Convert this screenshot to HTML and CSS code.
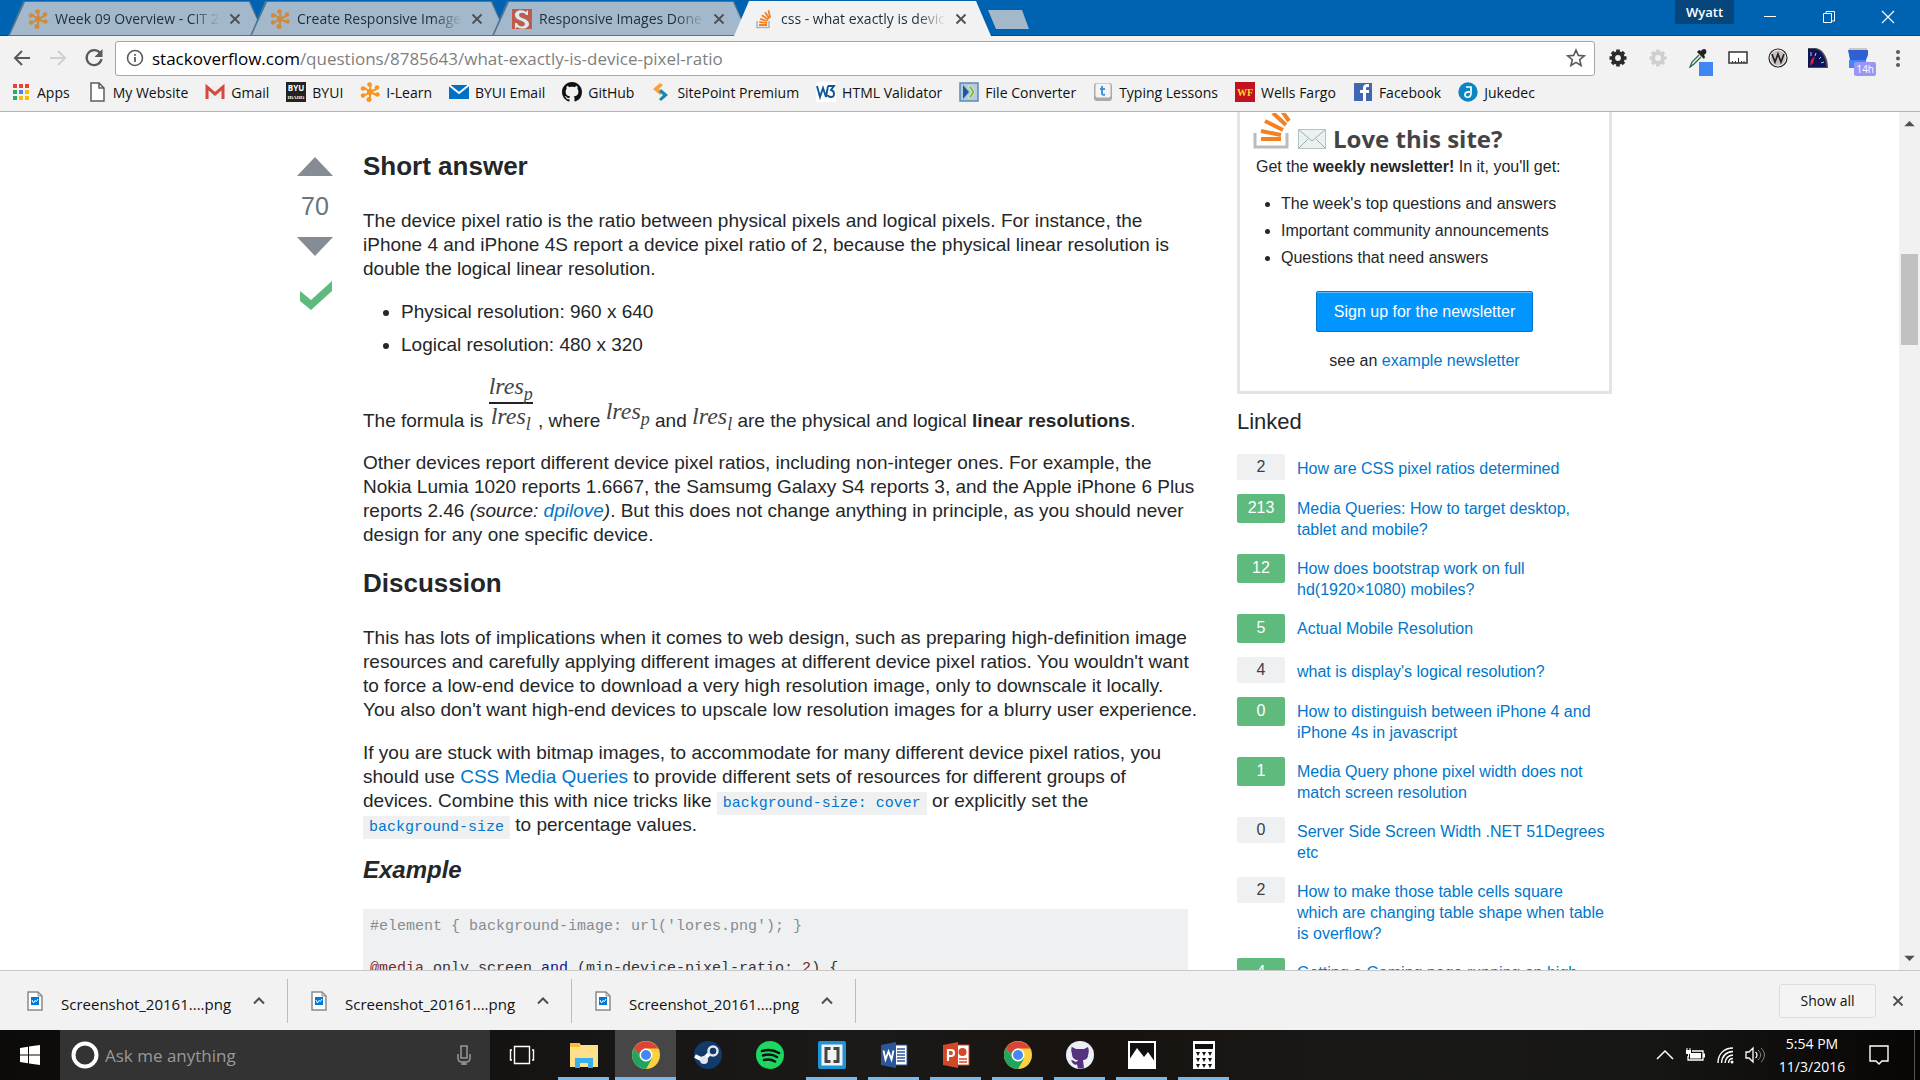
FILE: index.html
```html
<!DOCTYPE html>
<html lang="en">
<head>
<meta charset="utf-8">
<title>css - what exactly is device pixel ratio?</title>
<link rel="stylesheet" href="styles.css">
</head>
<body>
<svg class="defs" aria-hidden="true">
  <symbol id="ilearn" viewBox="0 0 20 20">
    <path d="M10 10 4 5.500M10 10 10.500 3M10 10 16.500 7M10 10 16.500 13M10 10 10 17M10 10 3.500 14" stroke="currentColor" stroke-width="2"/>
    <g fill="currentColor"><circle cx="10" cy="10" r="3"/><circle cx="9.500" cy="2.500" r="2.300"/><circle cx="3" cy="6.500" r="2.300"/><circle cx="17" cy="5.500" r="2.300"/><circle cx="17.500" cy="12.500" r="2.200"/><circle cx="9" cy="17.500" r="2.500"/><circle cx="3" cy="13.500" r="2.200"/></g>
  </symbol>
  <symbol id="so" viewBox="0 0 20 20">
    <path d="M3 12v6.500h12V12" fill="none" stroke="#b0b3b6" stroke-width="1.500"/>
    <g stroke="#f48024" stroke-width="1.800"><path d="M5 16h8M5.200 13.100l7.900.8M6 9.800l7.600 2.200M7.800 6.300l6.600 4.200M10.900 3.200l4.600 6.300M14.500 1.200l1.700 7.600"/></g>
  </symbol>
  <symbol id="github" viewBox="0 0 16 16"><path fill="currentColor" d="M8 0C3.580 0 0 3.580 0 8c0 3.540 2.290 6.530 5.470 7.590.4.070.55-.17.55-.38 0-.19-.01-.82-.01-1.490-2.010.37-2.530-.49-2.690-.94-.09-.23-.48-.94-.82-1.130-.28-.15-.68-.52-.01-.53.63-.01 1.080.58 1.230.82.72 1.210 1.870.87 2.330.66.070-.52.28-.87.51-1.070-1.780-.2-3.640-.89-3.640-3.950 0-.87.31-1.590.82-2.150-.08-.2-.36-1.020.080-2.120 0 0 .67-.21 2.200.82.64-.18 1.320-.27 2-.27s1.360.09 2 .27c1.530-1.040 2.200-.82 2.200-.82.44 1.100.16 1.920.080 2.120.51.56.82 1.270.82 2.150 0 3.070-1.870 3.750-3.650 3.950.29.25.54.73.54 1.480 0 1.070-.01 1.930-.01 2.200 0 .21.15.46.55.38A8.010 8.010 0 0 0 16 8c0-4.420-3.580-8-8-8"/></symbol>
  <symbol id="chrome" viewBox="0 0 28 28">
    <circle cx="14" cy="14" r="14" fill="#fdd13c"/>
    <path d="M1.900 7A14 14 0 0 0 14 28L20 17.500 8 17.500z" fill="#1fa463"/>
    <path d="M8 17.500 1.900 7 8 7l6 3z" fill="#1fa463"/><path d="M1.900 7A14 14 0 0 1 26.100 7.500H14a7 7 0 0 0-6.700 5z" fill="#dc4437"/>
    <circle cx="14" cy="14" r="6.500" fill="#fff"/><circle cx="14" cy="14" r="5" fill="#4688f1"/>
  </symbol>
  <symbol id="x" viewBox="0 0 12 12"><path d="M1.500 1.500l9 9M10.500 1.500l-9 9" stroke="currentColor" stroke-width="1.800" fill="none"/></symbol>
  <symbol id="up" viewBox="0 0 12 12"><path d="M1 8.500 6 3.500l5 5" stroke="currentColor" stroke-width="2" fill="none"/></symbol>
  <symbol id="gear" viewBox="0 0 20 20"><circle cx="10" cy="10" r="4.800" fill="none" stroke="currentColor" stroke-width="3.800"/><path d="M10 1.500v3M10 15.500v3M1.500 10h3M15.500 10h3M4 4l2.200 2.200M13.800 13.800l2.200 2.200M4 16l2.200-2.200M13.800 6.200l2.200-2.200" stroke="currentColor" stroke-width="3.600"/></symbol>
  <symbol id="picfile" viewBox="0 0 16 20"><path d="M1 1h10l4 4v14H1z" fill="#fff" stroke="#8a8a8a" stroke-width="1.500"/><path d="M11 1v4h4" fill="none" stroke="#8a8a8a"/><path d="M4 6h8v8H4z" fill="#0078d7"/><path d="M5 9l1.500 3L8 9.500l1.500 1L11 8" stroke="#fff" fill="none"/></symbol>
</svg>

<header class="chrome">
  <div class="titlebar">
    <nav class="tabs" aria-label="Tabs">
      <div class="tab"><svg class="fav muted"><use href="#ilearn"/></svg><span class="tab-title">Week 09 Overview - CIT 230</span><button class="icon-btn" aria-label="Close tab"><svg><use href="#x"/></svg></button></div>
      <div class="tab"><svg class="fav muted"><use href="#ilearn"/></svg><span class="tab-title">Create Responsive Images</span><button class="icon-btn" aria-label="Close tab"><svg><use href="#x"/></svg></button></div>
      <div class="tab"><svg class="fav" viewBox="0 0 20 20"><path d="M0 0h20v20H0z" fill="#bf5b4b"/><path d="M16 1v5h-2C13 3 7 3 7 6c0 4 10 3 10 9 0 5-8 6-12 3l-2 2v-6h2c2 5 8 4 8 1 0-4-10-3-10-9 0-5 7-6 11-3z" fill="#dce9f2"/></svg><span class="tab-title">Responsive Images Done</span><button class="icon-btn" aria-label="Close tab"><svg><use href="#x"/></svg></button></div>
      <div class="tab active"><svg class="fav"><use href="#so"/></svg><span class="tab-title">css - what exactly is device</span><button class="icon-btn" aria-label="Close tab"><svg><use href="#x"/></svg></button></div>
      <button class="new-tab" aria-label="New tab"></button>
    </nav>
    <div class="win">
      <button class="user">Wyatt</button>
      <button class="win-btn" aria-label="Minimize"><svg viewBox="0 0 14 14"><path d="M1 6.500h12" stroke="#fff"/></svg></button>
      <button class="win-btn" aria-label="Restore"><svg viewBox="0 0 14 14"><path d="M1.500 3.500h8v9h-8zM4 3V1.500h8.500V11H10" stroke="#fff" fill="none"/></svg></button>
      <button class="win-btn" aria-label="Close"><svg viewBox="0 0 14 14"><path d="M1 1l12 12M13 1 1 13" stroke="#fff" stroke-width="1.200"/></svg></button>
    </div>
  </div>
  <div class="toolbar">
    <button class="nav-btn" aria-label="Back"><svg viewBox="0 0 20 20"><path d="M18 10H3M10 3l-7 7 7 7" fill="none" stroke="#5a5a5a" stroke-width="2"/></svg></button>
    <button class="nav-btn" aria-label="Forward"><svg viewBox="0 0 20 20"><path d="M2 10h15M10 3l7 7-7 7" fill="none" stroke="#d0d0d0" stroke-width="2"/></svg></button>
    <button class="nav-btn" aria-label="Reload"><svg viewBox="0 0 20 20"><path d="M16 5a7.500 7.500 0 1 0 1.500 6" fill="none" stroke="#5a5a5a" stroke-width="2.200"/><path d="M18.500 1v8h-8z" fill="#5a5a5a"/></svg></button>
    <div class="omnibox">
      <svg class="info" viewBox="0 0 18 18"><circle cx="9" cy="9" r="7.500" fill="none" stroke="#5a5a5a" stroke-width="1.600"/><path d="M9 8v5M9 5v1.800" stroke="#5a5a5a" stroke-width="1.800"/></svg>
      <span class="url"><b>stackoverflow.com</b>/questions/8785643/what-exactly-is-device-pixel-ratio</span>
      <button class="star" aria-label="Bookmark this page"><svg viewBox="0 0 20 20"><path d="M10 2l2.300 5.400 5.900.5-4.500 3.800 1.400 5.800L10 14.400l-5.100 3.100 1.400-5.800L1.800 7.900l5.900-.5z" fill="none" stroke="#5a5a5a" stroke-width="1.600"/></svg></button>
    </div>
    <div class="exts">
      <button aria-label="Settings"><svg class="dark"><use href="#gear"/></svg></button>
      <button aria-label="Extension"><svg class="pale"><use href="#gear"/></svg></button>
      <button class="badged" aria-label="Color picker"><svg viewBox="0 0 20 20"><path d="M11 7 4 14l-2 5 4-3 7-7" fill="#e8efe8" stroke="#2f6a42" stroke-width="1.300"/><path d="M9 4l7 7 1-2-1-2c2-1 3-3 2-5s-4-1-5 1l-2-1z" fill="#222"/></svg><span class="swatch"></span></button>
      <button aria-label="Ruler"><svg viewBox="0 0 20 20"><path d="M1 4h18v11H1z" fill="#fff" stroke="#333" stroke-width="1.500"/><path d="M4.500 15v-2M7.500 15v-2M10.500 15v-5M13.500 15v-2M16 15v-2" stroke="#333"/></svg></button>
      <button aria-label="WhatFont"><svg viewBox="0 0 20 20"><circle cx="10" cy="10" r="9" fill="#c9bfbb" stroke="#222" stroke-width="1.200"/><circle cx="10" cy="10" r="7.800" fill="none" stroke="#eee"/><path d="M4 6l3 8 3-8 3 8 3-8" fill="none" stroke="#222" stroke-width="1.700"/></svg></button>
      <button aria-label="Speed"><svg viewBox="0 0 20 20"><path d="M0 0h8c6 1 12 8 12 20H0z" fill="#4a4d52"/><path d="M0 1h7c6 1 11 8 11 18H0z" fill="#0d1458"/><path d="M3 4v4M8 5l-1 3M13 9l-2 2M16 14l-3 1" stroke="#b9c4e8"/><path d="M2 18l1-6 4-4-2 7z" fill="#f0202c"/></svg></button>
      <button class="badged" aria-label="Calendar"><svg viewBox="0 0 20 20"><path d="M1 0h18v3H1z" fill="#c8c8c8"/><path d="M0 2h20v5l-2 5H2z" fill="#2f5fd0"/><path d="M1 12h17v8H1z" fill="#4285f4"/></svg><span class="hours">14h</span></button>
      <button class="menu" aria-label="Menu"><svg viewBox="0 0 20 20"><g fill="#5a5a5a"><circle cx="10" cy="4" r="2"/><circle cx="10" cy="10.500" r="2"/><circle cx="10" cy="17" r="2"/></g></svg></button>
    </div>
  </div>
  <nav class="bookmarks" aria-label="Bookmarks">
    <a href="#"><svg viewBox="0 0 20 20"><path d="M2 2h4v4H2zM8 2h4v4H8zM14 2h4v4h-4z" fill="#ee4035"/><path d="M2 8h4v4H2z" fill="#2fa860"/><path d="M8 8h4v4H8z" fill="#4285f4"/><path d="M14 8h4v4h-4zM8 14h4v4H8zM14 14h4v4h-4z" fill="#fbbc05"/><path d="M2 14h4v4H2z" fill="#2fa860"/></svg>Apps</a>
    <a href="#"><svg viewBox="0 0 20 20"><path d="M4 1h8l5 5v13H4zM12 1v5h5" fill="#fff" stroke="#5f5f5f" stroke-width="1.500"/></svg>My Website</a>
    <a href="#"><svg viewBox="0 0 20 20"><path d="M1 4h18v13H1z" fill="#eee"/><path d="M2 17V5l8 7 8-7v12" fill="none" stroke="#d64a3c" stroke-width="3"/></svg>Gmail</a>
    <a href="#"><svg viewBox="0 0 20 20"><path d="M0 0h20v20H0z" fill="#222"/><text x="10" y="9" class="ico-byu">BYU</text><text x="10" y="17" class="ico-idaho">IDAHO</text></svg>BYUI</a>
    <a href="#"><svg class="orange"><use href="#ilearn"/></svg>I-Learn</a>
    <a href="#"><svg viewBox="0 0 20 20"><path d="M0 3h20v14H0z" fill="#0072c6"/><path d="M0 3l10 8 10-8" fill="#0072c6" stroke="#fff" stroke-width="1.800"/></svg>BYUI Email</a>
    <a href="#"><svg class="black"><use href="#github"/></svg>GitHub</a>
    <a href="#"><svg viewBox="0 0 20 20"><path d="M9 1 2 7l7 6 2-3-3-3 4-4z" fill="#f9a03c"/><path d="M10 19l7-6-7-6-2 3 4 3-4 4z" fill="#1a87b0"/></svg>SitePoint Premium</a>
    <a href="#"><svg viewBox="0 0 20 20"><path d="M0 0h20v20H0z" fill="#fff"/><path d="M1 4l3 11 3-9 3 9 2-11M12 4h6l-3 4c4 1 4 7 0 7-2 0-3-1-3-2" fill="none" stroke="#10569c" stroke-width="1.900"/></svg>HTML Validator</a>
    <a href="#"><svg viewBox="0 0 20 20"><path d="M1 1h18v18H1z" fill="#b5cbe0" stroke="#5f8aad" stroke-width="1.500"/><path d="M4 3l6 7-6 7z" fill="#1f5a96"/><path d="M9 4h3l4 6-4 6H9l4-6z" fill="#7fb52e" stroke="#fff" stroke-width=".6"/></svg>File Converter</a>
    <a href="#"><svg viewBox="0 0 20 20"><rect x="1" y="1" width="18" height="18" rx="3" fill="#aaa"/><rect x="2.500" y="1.500" width="15" height="14" rx="2" fill="#f4f4f4"/><path d="M9 4v7c0 2 1 2 3 1.500M7 7h5" fill="none" stroke="#3a96d8" stroke-width="2"/></svg>Typing Lessons</a>
    <a href="#"><svg viewBox="0 0 20 20"><path d="M0 0h20v20H0z" fill="#c1121f"/><text x="10" y="14" class="ico-wf">WF</text></svg>Wells Fargo</a>
    <a href="#"><svg viewBox="0 0 20 20"><path d="M1 1h18v18H1z" fill="#4267b2"/><path d="M13 19v-8h3v-3h-3V6c0-1 1-1 3-1V2c-4-.5-6 1-6 4v2H7v3h3v8z" fill="#fff"/></svg>Facebook</a>
    <a href="#"><svg viewBox="0 0 20 20"><circle cx="10" cy="10" r="9.700" fill="#0c86c2"/><path d="M8 5h5v6c0 6-7 5-6 1 1-3 4-2 5-2" fill="none" stroke="#fff" stroke-width="1.700"/></svg>Jukedec</a>
  </nav>
</header>

<main class="page">
  <div class="container">
    <div class="vote">
      <button aria-label="Up vote"><svg viewBox="0 0 36 20" width="36" height="20"><path d="M18 0l18 19H0z" fill="#858c93"/></svg></button>
      <span class="score">70</span>
      <button aria-label="Down vote"><svg viewBox="0 0 36 20" width="36" height="20"><path d="M18 19 0 0h36z" fill="#858c93"/></svg></button>
      <svg class="check" viewBox="0 0 32 30" width="32" height="30"><path d="M0 10v10l11 9L32 10V0L11 19z" fill="#5fba7d"/></svg>
    </div>
    <article class="post">
      <h1>Short answer</h1>
      <p>The device pixel ratio is the ratio between physical pixels and logical pixels. For instance, the iPhone 4 and iPhone 4S report a device pixel ratio of 2, because the physical linear resolution is double the logical linear resolution.</p>
      <ul>
        <li>Physical resolution: 960 x 640</li>
        <li>Logical resolution: 480 x 320</li>
      </ul>
      <p class="formula">The formula is <span class="frac"><span class="math">lres<sub>p</sub></span><span class="math">lres<sub>l</sub></span></span> , where <span class="math high">lres<sub>p</sub></span> and <span class="math raised">lres<sub>l</sub></span> are the physical and logical <strong>linear resolutions</strong>.</p>
      <p>Other devices report different device pixel ratios, including non-integer ones. For example, the Nokia Lumia 1020 reports 1.6667, the Samsumg Galaxy S4 reports 3, and the Apple iPhone 6 Plus reports 2.46 <em>(source: <a href="#">dpilove</a>)</em>. But this does not change anything in principle, as you should never design for any one specific device.</p>
      <h1>Discussion</h1>
      <p>This has lots of implications when it comes to web design, such as preparing high-definition image resources and carefully applying different images at different device pixel ratios. You wouldn't want to force a low-end device to download a very high resolution image, only to downscale it locally. You also don't want high-end devices to upscale low resolution images for a blurry user experience.</p>
      <p>If you are stuck with bitmap images, to accommodate for many different device pixel ratios, you should use <a href="#">CSS Media Queries</a> to provide different sets of resources for different groups of devices. Combine this with nice tricks like <a href="#"><code>background-size: cover</code></a> or explicitly set the <a href="#"><code>background-size</code></a> to percentage values.</p>
      <h2>Example</h2>
      <pre><span class="com">#element { background-image: url('lores.png'); }</span>

<span class="lit">@media</span> only screen <span class="kwd">and</span> (min-device-pixel-ratio: <span class="lit">2</span>) {</pre>
    </article>
    <aside class="sidebar">
      <section class="newsletter">
        <div class="love"><svg viewBox="0 0 38 36" width="38" height="36"><path d="M2 20v14h32V20" fill="none" stroke="#bcbbbb" stroke-width="3"/><g stroke="#f48024" stroke-width="4"><path d="M8 26h20M8 18l20 4M12 8l18 9M20 0l13 12M29-2l7 10"/></g></svg><svg viewBox="0 0 28 20" width="28" height="20"><rect x=".5" y=".5" width="27" height="19" fill="#eaf1f1" stroke="#b4c3c3"/><path d="M1 1l13 11L27 1M1 19l9-9M27 19l-9-9" fill="none" stroke="#9fb0b0"/></svg><span>Love this site?</span></div>
        <p>Get the <strong>weekly newsletter!</strong> In it, you'll get:</p>
        <ul>
          <li>The week's top questions and answers</li>
          <li>Important community announcements</li>
          <li>Questions that need answers</li>
        </ul>
        <button class="signup">Sign up for the newsletter</button>
        <p class="example">see an <a href="#">example newsletter</a></p>
      </section>
      <h3>Linked</h3>
      <ul class="linked">
        <li><span class="count">2</span><a href="#">How are CSS pixel ratios determined</a></li>
        <li><span class="count ok">213</span><a href="#">Media Queries: How to target desktop, tablet and mobile?</a></li>
        <li><span class="count ok">12</span><a href="#">How does bootstrap work on full hd(1920×1080) mobiles?</a></li>
        <li><span class="count ok">5</span><a href="#">Actual Mobile Resolution</a></li>
        <li><span class="count">4</span><a href="#">what is display's logical resolution?</a></li>
        <li><span class="count ok">0</span><a href="#">How to distinguish between iPhone 4 and iPhone 4s in javascript</a></li>
        <li><span class="count ok">1</span><a href="#">Media Query phone pixel width does not match screen resolution</a></li>
        <li><span class="count">0</span><a href="#">Server Side Screen Width .NET 51Degrees etc</a></li>
        <li><span class="count">2</span><a href="#">How to make those table cells square<br>which are changing table shape when table is overflow?</a></li>
        <li><span class="count ok">4</span><a href="#">Getting a Gaming page running on high</a></li>
      </ul>
    </aside>
  </div>
  <div class="scrollbar" aria-hidden="true">
    <svg viewBox="0 0 20 20"><path d="M5 13l5-5 5 5z" fill="#505050"/></svg>
    <div class="track"><div class="thumb"></div></div>
    <svg viewBox="0 0 20 20"><path d="M5 7l5 5 5-5z" fill="#505050"/></svg>
  </div>
</main>

<section class="shelf" aria-label="Downloads">
  <div class="download"><svg><use href="#picfile"/></svg><span>Screenshot_20161....png</span><button class="icon-btn" aria-label="Options"><svg><use href="#up"/></svg></button></div>
  <div class="download"><svg><use href="#picfile"/></svg><span>Screenshot_20161....png</span><button class="icon-btn" aria-label="Options"><svg><use href="#up"/></svg></button></div>
  <div class="download"><svg><use href="#picfile"/></svg><span>Screenshot_20161....png</span><button class="icon-btn" aria-label="Options"><svg><use href="#up"/></svg></button></div>
  <button class="show-all">Show all</button>
  <button class="icon-btn close-shelf" aria-label="Close"><svg><use href="#x"/></svg></button>
</section>

<footer class="taskbar">
  <button class="start" aria-label="Start"><svg viewBox="0 0 20 20"><path d="M0 3l8-1.200V9.500H0zM9 1.600 20 0v9.500H9zM0 10.500h8v7.700L0 17zM9 10.500h11V20L9 18.400z" fill="#fff"/></svg></button>
  <div class="search">
    <svg class="cortana" viewBox="0 0 28 28"><circle cx="14" cy="14" r="11.500" fill="none" stroke="#fff" stroke-width="4"/></svg>
    <input type="text" placeholder="Ask me anything" aria-label="Ask me anything">
    <svg class="mic" viewBox="0 0 16 20"><path d="M5 1h6v12H5zM2 9v4c0 3 2 4 4 4h4c2 0 4-1 4-4V9M8 17v3M5 19h6" fill="none" stroke="#999" stroke-width="1.500"/></svg>
  </div>
  <nav class="apps" aria-label="Taskbar">
    <button aria-label="Task view"><svg viewBox="0 0 28 28"><path d="M6.500 5.500h15v17h-15zM4 9H2.500v10H4M24 9h1.500v10H24" fill="none" stroke="#fff" stroke-width="1.400"/></svg></button>
    <button class="run" aria-label="File Explorer"><svg viewBox="0 0 28 28"><path d="M0 2h9l2 2h17v22H0z" fill="#ffe08a"/><path d="M0 2h10v4H0z" fill="#f5c033"/><path d="M5 27V17h18v10h-5v-5h-8v5z" fill="#37b0e8"/></svg></button>
    <button class="run current" aria-label="Chrome"><svg><use href="#chrome"/></svg></button>
    <button aria-label="Steam"><svg viewBox="0 0 28 28"><circle cx="14" cy="14" r="14" fill="#123a6b"/><path d="M1 15l8 4 6-6" stroke="#fff" stroke-width="4" fill="none"/><circle cx="10" cy="19" r="4" fill="#dfe6ee"/><circle cx="19" cy="10" r="4.500" fill="#123a6b" stroke="#dfe6ee" stroke-width="2.500"/></svg></button>
    <button aria-label="Spotify"><svg viewBox="0 0 28 28"><circle cx="14" cy="14" r="14" fill="#1ed760"/><path d="M6 10c6-2 12-1 17 2M7 14.500c5-1.500 10-1 14 1.500M8 19c4-1 8-.5 11 1.500" stroke="#111" stroke-width="2.500" stroke-linecap="round" fill="none"/></svg></button>
    <button class="run" aria-label="Brackets"><svg viewBox="0 0 28 28"><rect width="28" height="28" rx="2" fill="#1b95d8"/><path d="M3.500 3.500h21v21h-21z" fill="#f2f2f2"/><path d="M12.500 7.500H8v13h4.500M15.500 7.500H20v13h-4.500" fill="none" stroke="#444" stroke-width="3"/></svg></button>
    <button class="run" aria-label="Word"><svg viewBox="0 0 28 28"><path d="M14 4h13v20H14z" fill="#fff" stroke="#2b579a"/><path d="M17 8h8M17 11h8M17 14h8M17 17h8M17 20h8" stroke="#2b579a" stroke-width="1.500"/><path d="M1 4l15-3v26L1 24z" fill="#2b579a"/><path d="M3.500 9.500l2 9 3-8 3 8 2-9" fill="none" stroke="#fff" stroke-width="1.900"/></svg></button>
    <button class="run" aria-label="PowerPoint"><svg viewBox="0 0 28 28"><path d="M14 4h13v20H14z" fill="#fff" stroke="#d24726"/><path d="M17 18h8M17 21h8" stroke="#d24726" stroke-width="1.500"/><circle cx="20.500" cy="11" r="4" fill="#d24726"/><path d="M1 4l15-3v26L1 24z" fill="#d24726"/><path d="M6 20V9h3c4 0 4 6 0 6H6" fill="none" stroke="#fff" stroke-width="2.200"/></svg></button>
    <button class="run" aria-label="Chrome"><svg><use href="#chrome"/></svg></button>
    <button class="run" aria-label="GitHub Desktop"><svg viewBox="0 0 28 28"><circle cx="14" cy="14" r="14" fill="#eceff5"/><path d="M6 6l4 2h8l4-2c1 3 1 5 0 8 0 4-3 5-5 5l1 8.500h-6l-1-4c-4 1-5-3-6-4 3-1 3 2 6 1l1-1.500c-3 0-6-2-6-6-1-3-1-5 0-8z" fill="#56317f"/></svg></button>
    <button class="run" aria-label="Photos"><svg viewBox="0 0 28 28"><path d="M1 1h26v26H1z" fill="#111" stroke="#fff" stroke-width="2"/><path d="M1 27V19l8-12 7 9 4-5 7 10v6z" fill="#fff"/></svg></button>
    <button class="run" aria-label="Calculator"><svg viewBox="0 0 28 28"><path d="M3 0h22v28H3z" fill="#fff"/><path d="M5 3h18v5H5z" fill="#111"/><path d="M6 11h4l-2 4zM12 11h4l-2 4zM18 11h4l-2 4zM6 17h4l-2 4zM12 17h4l-2 4zM18 17h4l-2 4zM6 23h4l-2 4zM12 23h4l-2 4zM18 23h4l-2 4z" fill="#111"/></svg></button>
  </nav>
  <div class="tray">
    <button aria-label="Show hidden icons"><svg viewBox="0 0 20 20"><path d="M2 14l8-8 8 8" fill="none" stroke="#fff" stroke-width="1.500"/></svg></button>
    <button aria-label="Battery"><svg viewBox="0 0 20 20"><path d="M7 6h11v9H3v-4" fill="none" stroke="#fff" stroke-width="1.300"/><path d="M5 8h11v5.500H5zM18 8.500h2v4h-2zM1 5h5v4H1z" fill="#fff"/><path d="M2 3v2M5 3v2M3.500 9v3" stroke="#fff"/></svg></button>
    <button aria-label="Network"><svg viewBox="0 0 20 20"><g fill="none" stroke="#fff" stroke-width="1.400"><path d="M3 18C3 9 9 3 18 3M6.500 18C7 11 11 7 18 6.500M10 18c.5-5 3-7.500 8-8M13.500 18c0-3 1.500-4.500 4.500-4.500"/></g><circle cx="17" cy="17" r="1.500" fill="#fff"/></svg></button>
    <button aria-label="Volume"><svg viewBox="0 0 20 20"><path d="M1 7h3l4-4v14l-4-4H1z" fill="none" stroke="#fff" stroke-width="1.300"/><path d="M10.500 7c2 1.500 2 4.500 0 6" fill="none" stroke="#fff" stroke-width="1.300"/><path d="M13 5c3.500 3 3.500 7 0 10M16 3c4.500 4 4.500 10 0 14" fill="none" stroke="#888"/></svg></button>
    <div class="clock"><span>5:54 PM</span><span>11/3/2016</span></div>
    <button class="notify" aria-label="Notifications"><svg viewBox="0 0 20 20"><path d="M1 1h18v15h-6l-3 3-3-3H1z" fill="none" stroke="#fff" stroke-width="1.400"/></svg></button>
  </div>
</footer>
</body>
</html>
```
FILE: styles.css
```css
* { box-sizing: border-box; }
body {
  margin: 0;
  height: 100vh;
  display: flex;
  flex-direction: column;
  overflow: hidden;
  background: #fff;
  color: #242729;
  font-family: "Liberation Sans", Arial, sans-serif;
  font-size: 16px;
}
button { margin: 0; padding: 0; border: 0; background: none; font: inherit; color: inherit; }
button svg { display: block; }
a { color: #0077cc; text-decoration: none; }
.defs { position: absolute; width: 0; height: 0; }
.chrome, .shelf, .taskbar { flex: none; font-family: "Open Sans", "Segoe UI", sans-serif; font-size: 14px; color: #111; }

/* window title bar and tabs */
.titlebar { display: flex; height: 36px; background: #0063b1; border-bottom: 1px solid #004a86; }
.tabs { display: flex; padding: 1px 0 0 8px; }
.tab {
  position: relative;
  display: flex;
  align-items: center;
  width: 257px;
  height: 35px;
  margin-right: -15px;
  padding: 0 18px 0 20px;
  color: #1d2d3b;
}
.tab::before, .tab::after {
  content: "";
  position: absolute;
  inset: 0;
  z-index: -1;
  background: #4b7596;
  clip-path: polygon(15px 0, calc(100% - 15px) 0, 100% 100%, 0 100%);
}
.tab::after { inset: 1px 1px 1px 2px; background: #a3b8ca; }
.tabs, .tab { isolation: isolate; }
.tab.active { z-index: 2; }
.tab.active::before, .tab.active::after { background: #f2f2f2; }
.tab.active::after { bottom: -1px; }
.fav { flex: none; width: 20px; height: 20px; margin-right: 7px; }
.muted { color: #cf8b3d; }
.orange { color: #f7941d; }
.black { color: #111; }
.dark { color: #2b2b2b; }
.pale { color: #cfcfcf; }
.tab-title {
  flex: 1;
  overflow: hidden;
  white-space: nowrap;
  mask-image: linear-gradient(to left, transparent 3px, #000 32px);
}
.icon-btn { display: grid; place-items: center; width: 24px; height: 24px; color: #4a4f54; }
.icon-btn svg { width: 12px; height: 12px; }
.new-tab { width: 41px; height: 19px; margin: 9px 0 0 12px; background: #a3b8ca; clip-path: polygon(0 0, 34px 0, 100% 100%, 8px 100%); }
.win { display: flex; margin-left: auto; padding-right: 3px; }
.user { width: 59px; height: 24px; margin-right: 6px; background: #08457a; color: #fff; font-size: 13px; font-weight: 600; }
.win-btn { display: grid; place-items: center; width: 59px; height: 34px; }
.win-btn svg { width: 14px; height: 14px; }

/* address bar */
.toolbar { display: flex; align-items: center; height: 44px; padding: 0 2px 0 4px; background: #f2f2f2; }
.nav-btn { display: grid; place-items: center; width: 36px; height: 36px; }
.nav-btn svg, .star svg { width: 20px; height: 20px; }
.omnibox {
  flex: 1;
  display: flex;
  align-items: center;
  height: 35px;
  margin-left: 3px;
  padding: 0 8px 0 10px;
  background: #fff;
  border: 1px solid #a6a6a6;
  border-radius: 3px;
}
.info { width: 18px; height: 18px; margin-right: 8px; }
.url { flex: 1; font-size: 17px; color: #808080; white-space: nowrap; }
.url b { font-weight: 400; color: #000; }
.exts { display: flex; padding-left: 3px; }
.exts button { position: relative; display: grid; place-items: center; width: 40px; height: 36px; }
.exts svg { width: 20px; height: 20px; }
.swatch { position: absolute; right: 5px; bottom: 0; width: 14px; height: 14px; background: #4285f4; }
.hours { position: absolute; right: 2px; bottom: 0; padding: 0 2px; background: #9a96f5; color: #fff; font-size: 10px; line-height: 14px; border-radius: 2px; }

/* bookmarks */
.bookmarks { display: flex; gap: 17px; height: 32px; padding: 0 11px 7px; align-items: center; background: #f2f2f2; border-bottom: 1px solid #b6b4b6; }
.bookmarks a { display: flex; align-items: center; gap: 6px; color: #111; white-space: nowrap; }
.bookmarks svg { flex: none; width: 20px; height: 20px; }
.ico-byu, .ico-idaho, .ico-wf { fill: #fff; text-anchor: middle; font-size: 8px; font-weight: 700; }
.ico-idaho { font-size: 5px; font-family: "Liberation Serif", serif; }
.ico-wf { fill: #ffd42a; font-size: 10px; font-family: "Liberation Serif", serif; }

/* page */
.page { flex: 1; min-height: 0; display: flex; overflow: hidden; }
.container {
  flex: 1;
  display: grid;
  grid-template-columns: 56px minmax(0, 836px) minmax(0, 393px);
  column-gap: 20px;
  max-width: 1325px;
  margin: 0 auto;
}
.vote { display: flex; flex-direction: column; align-items: center; padding-top: 45px; }
.score { margin: 14px 0 16px; font-size: 25px; line-height: 30px; color: #6a737c; }
.check { margin: 24px 0 0 2px; }
.post { font-size: 19px; line-height: 24px; }
.post > * { margin: 0 0 19px; }
.post h1 { margin: 20px 0 27px; font-size: 26px; line-height: 32px; }
.post > h1:first-child { padding-top: 18px; }
.post h2 { margin-bottom: 25px; font-size: 24px; line-height: 28px; font-style: italic; }
.post ul { padding-left: 38px; }
.post li + li { margin-top: 9px; }
.post .formula { margin: -2px 0 18px; }
.math { font-family: "Liberation Serif", serif; font-style: italic; font-size: 24px; line-height: 24px; color: #444; }
.math sub { font-size: 18px; line-height: 0; }
.formula > .math { line-height: 1px; }
.raised { vertical-align: 3px; }
.high { vertical-align: 8px; }
.frac { display: inline-block; vertical-align: 3px; text-align: center; }
.frac .math { display: block; }
.frac .math:first-child { padding-bottom: 4px; border-bottom: 2px solid #222; }
.post code { padding: 3px 6px; background: #eff0f1; font-family: "Liberation Mono", Consolas, monospace; font-size: 15px; line-height: 1; white-space: nowrap; }
.post pre { margin-right: 11px; padding: 7px; height: 200px; background: #eff0f1; color: #303336; font-family: "Liberation Mono", Consolas, monospace; font-size: 15px; line-height: 21px; }
.com { color: #858c93; }
.lit { color: #7d2727; }
.kwd { color: #101094; }

/* sidebar */
.sidebar { padding-left: 18px; font-size: 16px; line-height: 21px; }
.newsletter { height: 282px; padding: 0 16px; border: solid #e4e4e4; border-width: 0 3px 3px; }
.newsletter > * { margin: 0; }
.love { display: flex; align-items: flex-end; gap: 7px; height: 37px; margin-left: -3px; color: #444; font: 700 24px/24px "Open Sans", "Trebuchet MS", sans-serif; }
.love span { line-height: 20px; }
.newsletter p { margin-top: 7px; }
.newsletter ul { margin-top: 16px; padding-left: 25px; }
.newsletter li { margin-bottom: 6px; }
.signup { display: block; height: 41px; padding: 0 17px; margin: 23px auto 0; background: #0095ff; color: #fff; border: 1px solid #0077cc; border-radius: 2px; box-shadow: inset 0 1px 0 #66bfff; }
.newsletter .example { margin-top: 18px; text-align: center; }
.sidebar h3 { margin: 14px 0 18px; font-size: 22px; font-weight: 400; line-height: 28px; }
.linked { display: grid; gap: 14px; margin: 0; padding: 0; list-style: none; }
.linked li { display: grid; grid-template-columns: 48px 1fr; column-gap: 12px; align-items: start; }
.linked a { padding-top: 4px; }
.count { height: 26px; border-radius: 2px; background: #eff0f1; color: #3b4045; text-align: center; line-height: 26px; }
.count.ok { height: 29px; background: #5fba7d; color: #fff; line-height: 28px; }

/* scrollbar */
.scrollbar { flex: none; display: flex; flex-direction: column; width: 21px; background: #f1f1f1; }
.scrollbar svg { width: 21px; height: 22px; }
.track { flex: 1; padding: 120px 2px 0; }
.thumb { height: 91px; background: #c1c1c1; }

/* downloads */
.shelf { display: flex; align-items: center; height: 60px; background: #f2f2f2; border-top: 1px solid #c8c8c8; }
.download { display: flex; align-items: center; width: 284px; height: 44px; padding-left: 23px; border-right: 1px solid #bdbdbd; font-size: 15px; }
.download:first-child { width: 288px; padding-left: 27px; }
.download > svg { width: 16px; height: 20px; }
.download span { flex: 1; padding: 6px 0 0 18px; }
.download .icon-btn { margin-right: 16px; }
.show-all { width: 97px; height: 34px; margin-left: auto; border: 1px solid #dcdcdc; border-radius: 3px; background: #f4f4f4; }
.close-shelf { margin: 0 10px; }

/* taskbar */
.taskbar { display: flex; height: 50px; background: linear-gradient(90deg, #0c0b0a, #1b1a19 45%, #17120e 58%, #1a1918 70%, #171716 85%, #080605); color: #fff; }
.start { display: grid; place-items: center; width: 60px; }
.start svg { width: 20px; height: 20px; }
.search { display: flex; align-items: center; width: 430px; padding: 0 18px 0 11px; background: #333; }
.cortana { width: 28px; height: 28px; }
.search input { flex: 1; min-width: 0; padding: 0 6px; border: 0; background: none; color: #fff; font: 17px "Open Sans", "Segoe UI", sans-serif; }
.search input::placeholder { color: #999; opacity: 1; }
.mic { width: 16px; height: 20px; }
.apps { display: flex; gap: 1px; padding-left: 1px; }
.apps button { display: grid; place-items: center; width: 61px; height: 50px; }
.apps svg { width: 28px; height: 28px; }
.apps .run { background: linear-gradient(#76b9ed, #76b9ed) center bottom / 51px 3px no-repeat; }
.apps .current { background: linear-gradient(#76b9ed, #76b9ed) center bottom / 100% 3px no-repeat, #464646; }
.tray { display: flex; align-items: center; margin-left: auto; padding-right: 5px; }
.tray button { display: grid; place-items: center; width: 30px; height: 50px; }
.tray svg { width: 20px; height: 20px; }
.clock { display: grid; width: 84px; text-align: center; line-height: 23px; }
.tray .notify { width: 61px; padding-right: 10px; border-right: 1px solid #555; }
```
